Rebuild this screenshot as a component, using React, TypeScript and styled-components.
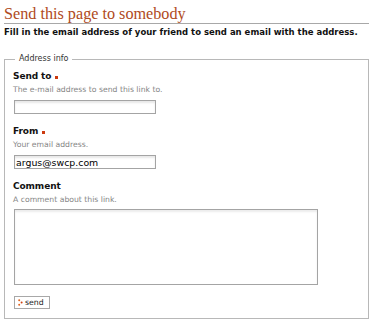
import styled, { createGlobalStyle } from 'styled-components'

const GlobalStyle = createGlobalStyle`
  body {
    margin: 0;
    background: #fff;
    font-family: "DejaVu Sans", "Liberation Sans", sans-serif;
    color: #111;
  }
`

const Page = styled.div`
  padding: 4px 6px 8px 4px;
`

const Title = styled.h1`
  margin: 0;
  padding-top: 2px;
  font-family: "Liberation Serif", serif;
  font-weight: normal;
  font-size: 16.2px;
  line-height: 17px;
  color: #b04a22;
  border-bottom: 1px solid #a8a8a8;
`

const Intro = styled.p`
  margin: 3px 0 0;
  font-size: 8.5px;
  line-height: 11px;
  font-weight: bold;
  color: #111;
`

const Fieldset = styled.fieldset`
  margin: 16px 0 0;
  padding: 6px 8px 9px;
  border: 1px solid #b8b8b8;
  min-width: 0;
`

const Legend = styled.legend`
  margin-left: 2px;
  padding: 0 4px;
  font-size: 8px;
  line-height: 10px;
  color: #333;
`

const Field = styled.div`
  margin-bottom: 11px;
`

const Label = styled.label`
  display: flex;
  align-items: center;
  gap: 4px;
  font-size: 9px;
  line-height: 13px;
  font-weight: bold;
  letter-spacing: -0.1px;
  color: #111;
`

const Required = styled.span`
  width: 3px;
  height: 3px;
  background: #cc3a10;
  margin-top: 1px;
`

const Hint = styled.div`
  margin-top: 1px;
  font-size: 7.7px;
  line-height: 12px;
  color: #858585;
`

const Input = styled.input<{ $width: number }>`
  display: block;
  box-sizing: border-box;
  margin: 4px 0 0 1px;
  width: ${p => p.$width}px;
  height: 14px;
  padding: 0 1px;
  border: 1px solid #a4a4a4;
  box-shadow: inset 0 2px 2px #e8e8e8;
  font-family: "DejaVu Sans", sans-serif;
  font-size: 9.4px;
  color: #000;
  outline: none;
`

const TextArea = styled.textarea`
  display: block;
  box-sizing: border-box;
  margin: 3px 0 0 1px;
  width: 304px;
  height: 76px;
  border: 1px solid #a4a4a4;
  box-shadow: inset 0 2px 2px #ececec;
  resize: none;
  outline: none;
`

const SendButton = styled.button`
  display: flex;
  align-items: center;
  gap: 2px;
  box-sizing: border-box;
  margin-left: 1px;
  width: 36px;
  height: 13px;
  padding: 0 3px;
  border: 1px solid #a8a8a8;
  background: #fff;
  font-family: "DejaVu Sans", sans-serif;
  font-size: 7.8px;
  color: #222;
`

const Arrow = () => (
  <svg width="5" height="7" viewBox="0 0 5 7">
    <circle cx="1.2" cy="1.2" r="1" fill="#e06420" />
    <circle cx="3.6" cy="3.5" r="1" fill="#d04010" />
    <circle cx="1.2" cy="5.8" r="1" fill="#e06420" />
  </svg>
)

export default function App() {
  return (
    <Page>
      <GlobalStyle />
      <Title>Send this page to somebody</Title>
      <Intro>Fill in the email address of your friend to send an email with the address.</Intro>
      <Fieldset>
        <Legend>Address info</Legend>
        <Field>
          <Label>
            Send to <Required />
          </Label>
          <Hint>The e-mail address to send this link to.</Hint>
          <Input $width={142} />
        </Field>
        <Field>
          <Label>
            From <Required />
          </Label>
          <Hint>Your email address.</Hint>
          <Input $width={142} defaultValue="argus@swcp.com" />
        </Field>
        <Field>
          <Label>Comment</Label>
          <Hint>A comment about this link.</Hint>
          <TextArea />
        </Field>
        <SendButton>
          <Arrow />
          send
        </SendButton>
      </Fieldset>
    </Page>
  )
}
